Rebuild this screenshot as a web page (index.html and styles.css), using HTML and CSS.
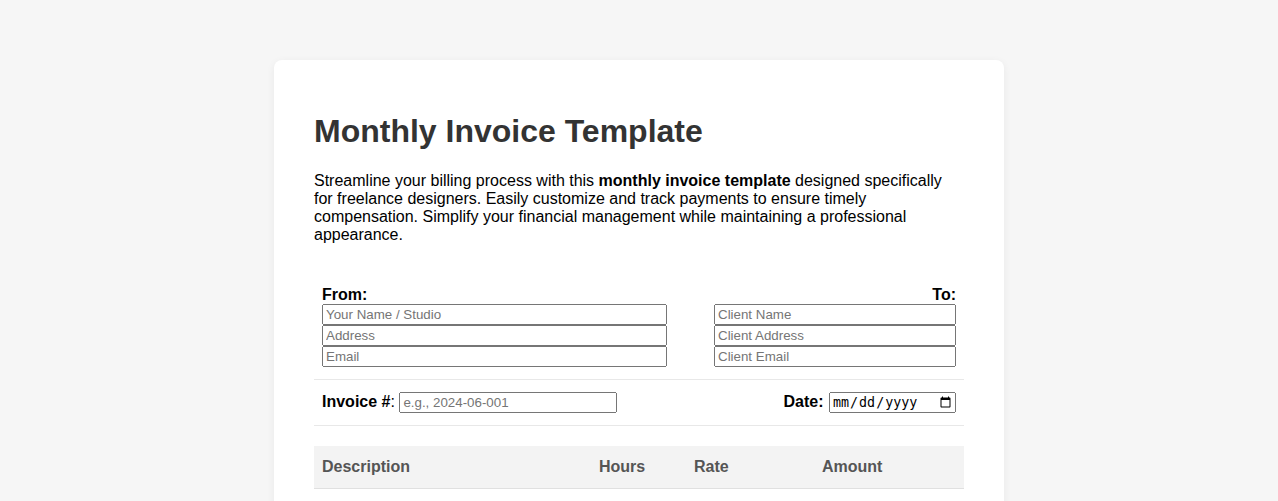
FILE: index.html
```html
<!DOCTYPE html>
<html lang="en">
<head>
    <meta charset="UTF-8">
    <meta name="viewport" content="width=device-width, initial-scale=1.0">
    <title>Monthly Invoice Template</title>
    <link rel="stylesheet" href="styles.css">
</head>
<body>
    <div class="invoice">
        <h1>Monthly Invoice Template</h1>
        <p class="intro">Streamline your billing process with this <strong>monthly invoice template</strong> designed specifically for freelance designers. Easily customize and track payments to ensure timely compensation. Simplify your financial management while maintaining a professional appearance.</p>

        <div class="parties">
            <div class="party party-from">
                <label class="party-label">From:</label>
                <input type="text" placeholder="Your Name / Studio">
                <input type="text" placeholder="Address">
                <input type="text" placeholder="Email">
            </div>
            <div class="party party-to">
                <label class="party-label">To:</label>
                <input type="text" placeholder="Client Name">
                <input type="text" placeholder="Client Address">
                <input type="text" placeholder="Client Email">
            </div>
        </div>

        <div class="meta">
            <div class="meta-item">
                <strong>Invoice #</strong>: <input type="text" id="invoiceNumber" placeholder="e.g., 2024-06-001">
            </div>
            <div class="meta-item">
                <strong>Date:</strong> <input type="date" id="invoiceDate">
            </div>
        </div>

        <table class="items">
            <thead>
                <tr>
                    <th class="col-desc">Description</th>
                    <th class="col-hours">Hours</th>
                    <th class="col-rate">Rate</th>
                    <th class="col-amount">Amount</th>
                </tr>
            </thead>
            <tbody id="itemRows"></tbody>
        </table>
    </div>
</body>
</html>
```

FILE: styles.css
```css
body {
    margin: 0;
    padding: 0;
    font-family: Arial, "Liberation Sans", sans-serif;
    background-color: #f6f6f6;
    color: #000;
}
.invoice {
    width: 650px;
    margin: 60px auto 40px;
    padding: 53px 40px 40px;
    background-color: white;
    border-radius: 8px;
    box-shadow: 0 2px 8px rgba(0,0,0,0.06);
}
.invoice h1 {
    margin: 0 0 22px;
    font-size: 32px;
    color: #333;
}
.intro {
    margin: 0 0 34px;
    font-size: 16px;
}
.parties {
    display: flex;
    justify-content: space-between;
    padding: 8px 8px 12px;
    border-bottom: 1px solid #e8e8e8;
}
.party-from {
    width: 345px;
}
.party-to {
    width: 242px;
    text-align: right;
}
.party-label {
    display: block;
    font-weight: bold;
    font-size: 16px;
}
.party input {
    display: block;
    width: 100%;
    box-sizing: border-box;
    margin: 0;
}
.meta {
    display: flex;
    justify-content: space-between;
    align-items: center;
    padding: 12px 8px;
    border-bottom: 1px solid #e8e8e8;
}
.meta-item {
    font-size: 16px;
}
#invoiceNumber {
    width: 218px;
    box-sizing: border-box;
    margin-left: 0;
}
#invoiceDate {
    width: 127px;
    box-sizing: border-box;
    margin-left: 1px;
}
.items {
    width: 100%;
    margin-top: 20px;
    border-collapse: collapse;
    table-layout: fixed;
}
.items th {
    padding: 12px 8px;
    text-align: left;
    font-size: 16px;
    background-color: #f3f3f3;
    color: #555;
    border-bottom: 1px solid #e0e0e0;
}
.items td {
    padding: 8px;
    border-bottom: 1px solid #eee;
}
.col-desc { width: 261px; }
.col-hours { width: 79px; }
.col-rate { width: 112px; }
.col-amount { width: 134px; }
```
